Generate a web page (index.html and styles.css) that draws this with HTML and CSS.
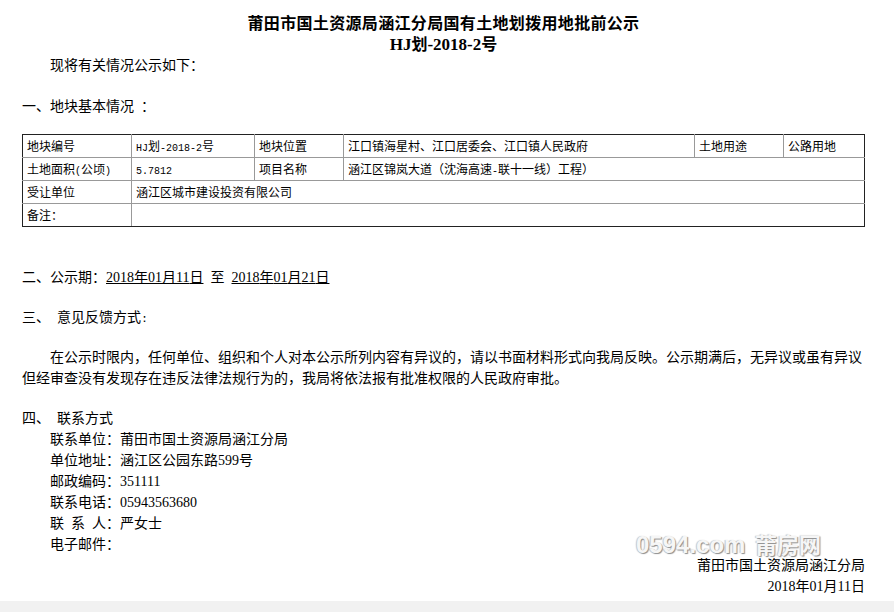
FILE: index.html
```html
<!DOCTYPE html>
<html lang="zh-CN">
<head>
<meta charset="utf-8">
<title>公示</title>
<link rel="stylesheet" href="styles.css">
</head>
<body>
<main class="page">
  <h1 class="title">莆田市国土资源局涵江分局国有土地划拨用地批前公示</h1>
  <h2 class="subtitle"><span class="s">HJ</span>划<span class="s">-2018-2</span>号</h2>
  <p class="line indent">现将有关情况公示如下：</p>
  <p class="line gap-1">一、地块基本情况<span class="m"> </span>：</p>
  <table class="info">
    <colgroup>
      <col class="c1"><col class="c2"><col class="c3"><col class="c4"><col class="c5"><col class="c6">
    </colgroup>
    <tr>
      <td>地块编号</td>
      <td><span class="m">HJ</span>划<span class="m">-2018-2</span>号</td>
      <td>地块位置</td>
      <td>江口镇海星村、江口居委会、江口镇人民政府</td>
      <td>土地用途</td>
      <td>公路用地</td>
    </tr>
    <tr>
      <td>土地面积<span class="m">(</span>公顷<span class="m">)</span></td>
      <td><span class="m">5.7812</span></td>
      <td>项目名称</td>
      <td colspan="3">涵江区锦岚大道（沈海高速<span class="m">-</span>联十一线）工程）</td>
    </tr>
    <tr>
      <td>受让单位</td>
      <td colspan="5">涵江区城市建设投资有限公司</td>
    </tr>
    <tr>
      <td>备注：</td>
      <td colspan="5"></td>
    </tr>
  </table>
  <p class="line gap-2">二、公示期：<span class="date"><span class="n">2018</span>年<span class="n">01</span>月<span class="n">11</span>日</span><span class="m"> </span>至<span class="m"> </span><span class="date"><span class="n">2018</span>年<span class="n">01</span>月<span class="n">21</span>日</span></p>
  <p class="line gap-3">三、<span class="m"> </span>意见反馈方式<span class="m">:</span></p>
  <p class="line gap-3 indent">在公示时限内，任何单位、组织和个人对本公示所列内容有异议的，请以书面材料形式向我局反映。公示期满后，无异议或虽有异议但经审查没有发现存在违反法律法规行为的，我局将依法报有批准权限的人民政府审批。</p>
  <p class="line gap-3">四、<span class="m"> </span>联系方式</p>
  <ul class="contact">
    <li>联系单位：莆田市国土资源局涵江分局</li>
    <li>单位地址：涵江区公园东路<span class="n">599</span>号</li>
    <li>邮政编码：<span class="n">351111</span></li>
    <li>联系电话：<span class="n">05943563680</span></li>
    <li>联<span class="m"> </span>系<span class="m"> </span>人：严女士</li>
    <li>电子邮件：</li>
  </ul>
  <p class="line sign">莆田市国土资源局涵江分局</p>
  <p class="line sign"><span class="n">2018</span>年<span class="n">01</span>月<span class="n">11</span>日</p>
  <div class="watermark">0594.com <span class="watermark-cjk">莆房网</span></div>
</main>
<div class="bottom-bar"></div>
</body>
</html>
```
FILE: styles.css
```css
html, body {
  margin: 0;
  height: 100%;
  overflow: hidden;
}
body {
  display: flex;
  flex-direction: column;
  background: #fff;
  color: #000;
  font-family: "Noto Sans CJK SC", "Liberation Sans", sans-serif;
  font-size: 14px;
  line-height: 21px;
}
.page {
  position: relative;
  flex: 1;
  box-sizing: border-box;
  padding: 12px 29px 0 22px;
}
.title, .subtitle {
  margin: 0;
  text-align: center;
  font-size: 16px;
  line-height: 21px;
  font-weight: 700;
}
.title { letter-spacing: .33px; }
.line { margin: 0; }
.indent { text-indent: 28px; }
.n, .m, .s {
  line-height: 1;
  white-space: pre;
}
.n {
  font-family: "Liberation Serif", serif;
  font-size: 14px;
}
.m {
  font-family: "Liberation Mono", monospace;
  font-size: 11.67px;
}
.s {
  font-family: "Liberation Serif", serif;
  font-size: 17px;
}
.gap-1 { margin-top: 20px; }
.gap-2 { margin-top: 39px; }
.gap-3 { margin-top: 19px; }
.info {
  width: 842px;
  margin-top: 18px;
  border-collapse: collapse;
  table-layout: fixed;
  border: 1px solid #222;
  font-size: 12px;
  line-height: 18px;
}
.info td {
  height: 23px;
  box-sizing: border-box;
  padding: 0 4px;
  border: 1px solid #999;
  vertical-align: middle;
  white-space: nowrap;
}
.info tr:first-child td { border-top-color: #222; }
.info tr:last-child td { border-bottom-color: #222; }
.info td:first-child { border-left-color: #222; }
.info td:last-child { border-right-color: #222; }
.info .m { font-size: 10px; }
.c1 { width: 109px; }
.c2 { width: 123px; }
.c3 { width: 89px; }
.c4 { width: 351px; }
.c5 { width: 89px; }
.c6 { width: 81px; }
.date { text-decoration: underline; }
.contact {
  list-style: none;
  margin: 0;
  padding: 0 0 0 28px;
}
.sign { text-align: right; }
.watermark {
  position: absolute;
  left: 636px;
  top: 535px;
  font-family: "Liberation Sans", "Noto Sans CJK SC", sans-serif;
  font-size: 24px;
  font-weight: 700;
  line-height: 20px;
  white-space: nowrap;
  color: #f6f6f6;
  text-shadow: 1px 1px 1px #8c8c8c, -1px 0 1px #c4c4c4;
}
.watermark-cjk {
  margin-left: 3px;
  font-size: 22px;
}
.bottom-bar {
  height: 11px;
  background: #f1f1f1;
}
```
